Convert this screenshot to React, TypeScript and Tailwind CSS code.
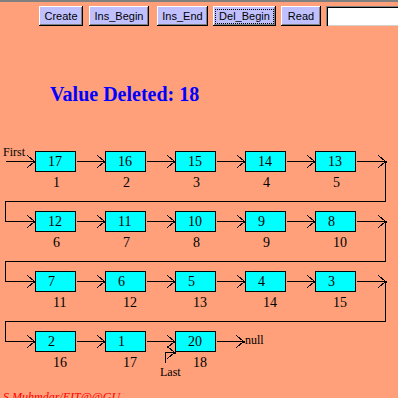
import React from "react";

const rows: number[][] = [
  [17, 16, 15, 14, 13],
  [12, 11, 10, 9, 8],
  [7, 6, 5, 4, 3],
  [2, 1, 20],
];

const serif = { fontFamily: '"Liberation Serif", "Times New Roman", serif' };

function Chev({ x, y }: { x: number; y: number }) {
  return (
    <g>
      <path d={`M${x - 7},${y - 6} L${x},${y} L${x - 7},${y + 6}`} fill="none" stroke="#000" strokeWidth={1} />
      <rect x={x - 1} y={y - 1} width={2} height={2} fill="#000" />
    </g>
  );
}

function Btn({ label, w, ml, focus }: { label: string; w: string; ml: string; focus?: boolean }) {
  return (
    <div
      className={`${w} ${ml} shrink-0 h-[20px] bg-[#c0c0ff] flex items-center justify-center text-[11px] text-black shadow-[inset_-1px_-1px_0_#000,inset_1px_1px_0_#fff,inset_-2px_-2px_0_#808080]`}
      style={{ fontFamily: '"Liberation Sans", Arial, sans-serif' }}
    >
      {focus ? (
        <span className="border border-dotted border-black px-[3px] leading-[13px]">{label}</span>
      ) : (
        <span className="leading-[13px]">{label}</span>
      )}
    </div>
  );
}

export default function App() {
  const lines: React.ReactNode[] = [];
  rows.forEach((row, r) => {
    const y = 21 + 60 * r;
    if (r === 0) {
      lines.push(<path key={`in${r}`} d={`M5,${y} H34`} stroke="#000" fill="none" />);
    }
    lines.push(<Chev key={`inc${r}`} x={34} y={y} />);
    row.forEach((_, c) => {
      const bx = 35 + 70 * c;
      if (c < row.length - 1) {
        lines.push(<path key={`l${r}${c}`} d={`M${bx + 41},${y} H${bx + 69}`} stroke="#000" fill="none" />);
        lines.push(<Chev key={`c${r}${c}`} x={bx + 69} y={y} />);
      }
    });
    if (r < rows.length - 1) {
      lines.push(
        <path
          key={`w${r}`}
          d={`M356,${y} H385 V${y + 40} H5 V${y + 60} H34`}
          stroke="#000"
          fill="none"
        />
      );
      lines.push(<Chev key={`wc${r}`} x={385} y={y} />);
    } else {
      lines.push(<path key="end" d={`M216,${y} H243`} stroke="#000" fill="none" />);
      lines.push(<Chev key="endc" x={243} y={y} />);
      lines.push(<path key="last" d={`M165,222 V212 H174`} stroke="#000" fill="none" />);
      lines.push(<Chev key="lastc" x={174} y={212} />);
    }
  });

  return (
    <div className="w-[398px] h-[398px] bg-[#ffa07a] overflow-hidden border-t-2 border-[#808080] flex flex-col">
      <div className="flex shrink-0 h-[24px] pt-[4px]">
        <Btn label="Create" w="w-[44px]" ml="ml-[39px]" />
        <Btn label="Ins_Begin" w="w-[60px]" ml="ml-[6px]" />
        <Btn label="Ins_End" w="w-[51px]" ml="ml-[8px]" />
        <Btn label="Del_Begin" w="w-[63px]" ml="ml-[5px]" focus />
        <Btn label="Read" w="w-[40px]" ml="ml-[5px]" />
        <div className="ml-[5px] w-[100px] h-[20px] shrink-0 bg-white shadow-[inset_1px_1px_0_#808080,inset_2px_2px_0_#000,inset_-1px_-1px_0_#d4d0c8]" />
      </div>
      <div
        className="mt-[58px] shrink-0 pl-[50px] h-[20px] leading-[20px] text-[20px] font-bold text-[#0000ff]"
        style={serif}
      >
        Value Deleted: 18
      </div>
      <div className="relative mt-[36px] h-[250px] shrink-0" style={serif}>
        <svg className="absolute left-0 top-0" width={398} height={250} shapeRendering="crispEdges">
          <g transform="translate(0.5,0.5)">{lines}</g>
        </svg>
        <div className="absolute left-[3px] top-[5px] text-[12px] leading-[14px] text-black">First</div>
        {rows.map((row, r) =>
          row.map((v, c) => {
            const bx = 35 + 70 * c;
            const by = 11 + 60 * r;
            const idx = r * 5 + c + 1;
            return (
              <React.Fragment key={`${r}-${c}`}>
                <div
                  className="absolute w-[41px] h-[21px] bg-[#00ffff] border border-black flex items-center pl-[12px] text-[14px] leading-[16px] text-black"
                  style={{ left: bx, top: by }}
                >
                  {v}
                </div>
                <div
                  className="absolute text-[14px] leading-[16px] text-black"
                  style={{ left: bx + 18, top: by + 24 }}
                >
                  {idx}
                </div>
              </React.Fragment>
            );
          })
        )}
        <div className="absolute left-[245px] top-[193px] text-[12px] leading-[14px] text-black">null</div>
        <div className="absolute left-[160px] top-[225px] text-[12px] leading-[14px] text-black">Last</div>
      </div>
      <div className="shrink-0 pl-[3px] text-[12px] leading-[14px] italic text-[#ff0000]" style={serif}>
        S.Muhmdar/EIT@@GU
      </div>
    </div>
  );
}
